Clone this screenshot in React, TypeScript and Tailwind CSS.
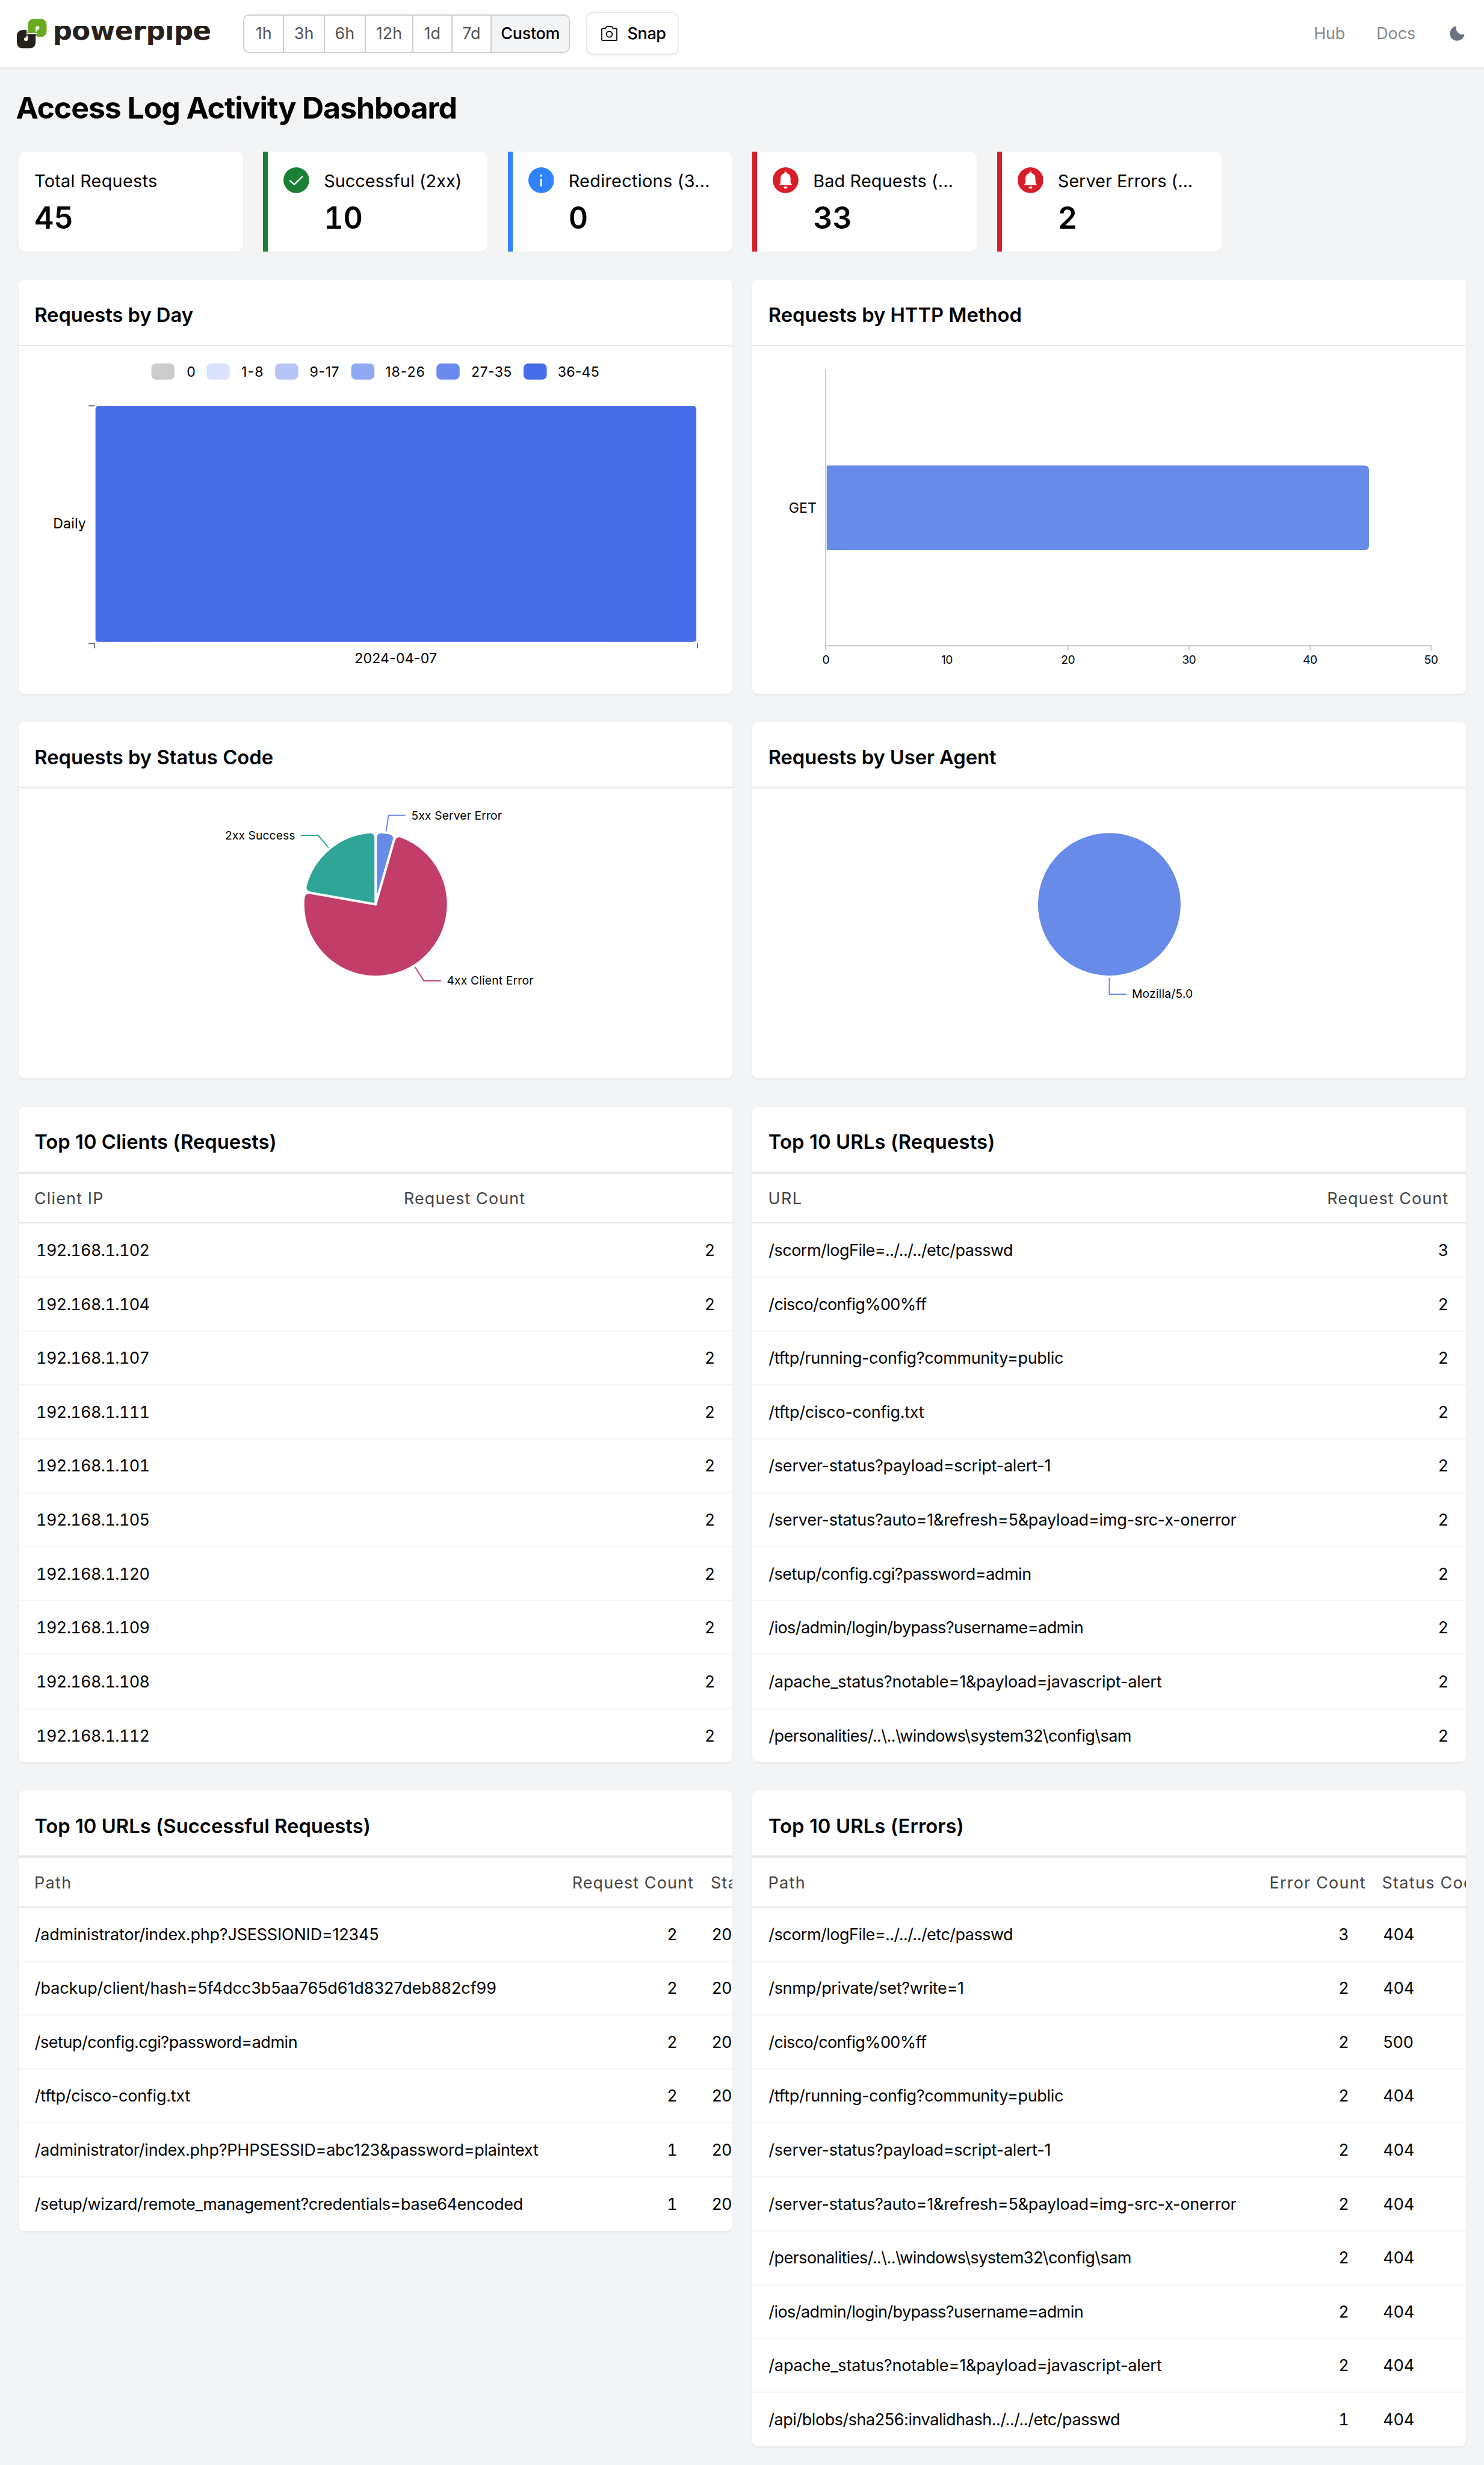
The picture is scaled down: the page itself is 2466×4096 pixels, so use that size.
import React from "react";

/* ---------- text fitted to a measured advance width ---------- */
const ctx = document.createElement("canvas").getContext("2d")!;
function tracking(text: string, size: number, weight: number, width: number, family = "Inter") {
  ctx.font = `${weight} ${size * 10}px "${family}"`;
  return (width - ctx.measureText(text).width / 10) / text.length;
}
function Fit({ t, w, size = 14, weight = 400, family, className = "" }: { t: string; w: number; size?: number; weight?: number; family?: string; className?: string }) {
  return (
    <span className={"whitespace-nowrap " + className} style={{ fontSize: size, fontWeight: weight, letterSpacing: tracking(t, size, weight, w, family) }}>
      {t}
    </span>
  );
}

/* ---------- header ---------- */
function LogoMark() {
  const half = "M57 68 V34 C57 11 70 0 91 0 H120 C142 0 154 11 154 34 V62 C154 84 142 95 120 95 H104 V57 A10 10 0 1 0 97 50 V66 H103 V73 H52 V66 H57 Z";
  return (
    <svg viewBox="0 0 154 153" className="h-[25.7px] w-[25.7px] shrink-0">
      <path d={half} fill="#68ab21" />
      <path d={half} fill="#26211a" transform="rotate(180 77 76.5)" />
    </svg>
  );
}

const ranges = [
  { t: "1h", c: "w-[33.3px]" },
  { t: "3h", c: "w-[35px] border-l-[1.04px]" },
  { t: "6h", c: "w-[35.5px] border-l-[1.04px]" },
  { t: "12h", c: "w-[40.9px] border-l-[1.04px]" },
  { t: "1d", c: "w-[33.6px] border-l-[1.04px]" },
  { t: "7d", c: "w-[34px] border-l-[1.04px]" },
];

function Header() {
  return (
    <header className="flex h-[59px] items-center border-b-[1.04px] border-[#e5e7eb] bg-white pl-[14.6px] pr-[16.4px]">
      <div className="flex w-[195.2px] shrink-0 items-center">
        <LogoMark />
        <div className="ml-[5.2px] mt-[7px] flex h-[20px] items-start overflow-hidden">
          <Fit t="powerpipe" w={136.5} size={23.4} weight={700} family="DejaVu Sans" className="-mt-[10.2px] leading-[28px] text-[#26211a] font-['DejaVu_Sans',sans-serif]" />
        </div>
      </div>
      <div className="flex h-[33.4px] overflow-hidden rounded-[5px] border-[1.04px] border-[#d0d0d0] text-[14px] text-[#555]">
        {ranges.map((r) => (
          <div key={r.t} className={"flex items-center justify-center border-[#d0d0d0] " + r.c}>{r.t}</div>
        ))}
        <div className="flex w-[67.6px] items-center justify-center border-l-[1.04px] border-[#d0d0d0] bg-[#f3f4f6] text-black">
          <Fit t="Custom" w={50.8} weight={450} />
        </div>
      </div>
      <div className="ml-[14px] flex h-[37px] w-[80px] items-center rounded-[6px] border-[1.04px] border-[#e8e8e8] bg-white pl-[12px] shadow-[0_1px_2px_rgba(0,0,0,0.05)]">
        <svg viewBox="0 0 28 26" className="h-[13px] w-[14px]" fill="none" stroke="#000" strokeWidth="1.8" strokeLinejoin="round">
          <path d="M1 6 Q1 4.6 2.4 4.6 H7.4 L9.6 1 H18.4 L20.6 4.6 H25.6 Q27 4.6 27 6 V23.6 Q27 25 25.6 25 H2.4 Q1 25 1 23.6 Z" />
          <circle cx="14" cy="14.4" r="5" />
        </svg>
        <Fit t="Snap" w={33.2} weight={450} className="ml-[8.4px]" />
      </div>
      <div className="ml-auto flex items-center text-[#888]">
        <Fit t="Hub" w={27} className="mr-[27px]" />
        <Fit t="Docs" w={33.7} className="mr-[29.7px]" />
        <svg viewBox="0 0 26 26" className="h-[13px] w-[13px]" fill="#6b7280">
          <path d="M11.6 0.6 A12.6 12.6 0 1 0 25.4 14.4 A11 11 0 0 1 11.6 0.6 Z" />
        </svg>
      </div>
    </header>
  );
}

/* ---------- stat cards ---------- */
type Icon = "check" | "info" | "bell";
function StatIcon({ kind, color }: { kind: Icon; color: string }) {
  return (
    <svg viewBox="0 0 44.4 44.4" className="h-[22.2px] w-[22.2px] shrink-0">
      <circle cx="22.2" cy="22.2" r="22.2" fill={color} />
      {kind === "check" && <path d="M11.2 23 L18.7 29.7 L32.6 15.9" fill="none" stroke="#fff" strokeWidth="2.4" strokeLinecap="round" strokeLinejoin="round" />}
      {kind === "info" && (
        <g fill="#fff">
          <circle cx="22" cy="14.6" r="1.8" />
          <rect x="20.4" y="19.5" width="3.2" height="13.6" rx="1.6" />
        </g>
      )}
      {kind === "bell" && (
        <g fill="#fff">
          <path d="M22.2 7.4 C23.5 7.4 24.2 8.4 24.2 10.3 C28.4 11.2 30.8 14.6 30.8 19.4 V25 C30.8 27 31.3 28.1 32.8 29 V30.4 H11.6 V29 C13.1 28.1 13.6 27 13.6 25 V19.4 C13.6 14.6 16 11.2 20.2 10.3 C20.2 8.4 20.9 7.4 22.2 7.4 Z" />
          <path d="M19.2 33.2 H25.2 V34.6 C25.2 36 24 37 22.2 37 C20.4 37 19.2 36 19.2 34.6 Z" />
        </g>
      )}
    </svg>
  );
}

const stats: { label: string; w: number; value: string; icon?: Icon; color?: string; bar?: string }[] = [
  { label: "Total Requests", w: 106.2, value: "45" },
  { label: "Successful (2xx)", w: 119, value: "10", icon: "check", color: "#1a8036", bar: "border-[#1a8036]" },
  { label: "Redirections (3...", w: 122.2, value: "0", icon: "info", color: "#3083ff", bar: "border-[#3083ff]" },
  { label: "Bad Requests (...", w: 121, value: "33", icon: "bell", color: "#da1e28", bar: "border-[#da1e28]" },
  { label: "Server Errors (...", w: 116.6, value: "2", icon: "bell", color: "#da1e28", bar: "border-[#da1e28]" },
];

function Stat({ s }: { s: (typeof stats)[number] }) {
  return (
    <div className={"flex h-[86px] bg-white pt-[13px] shadow-[0_1px_1px_rgba(0,0,0,0.03)] " + (s.icon ? "rounded-r-[6px] border-l-[4.16px] pl-[13.4px] " + s.bar : "rounded-[6px] pl-[13.6px]")}>
      {s.icon && (
        <div className="mr-[12.6px] flex h-[23px] items-center">
          <StatIcon kind={s.icon} color={s.color!} />
        </div>
      )}
      <div className="flex flex-col">
        <div className="flex h-6 items-center pt-px">
          <Fit t={s.label} w={s.w} size={15} />
        </div>
        <div className="mt-[4px] flex h-8 items-center text-[26px] font-semibold tabular-nums">{s.value}</div>
      </div>
    </div>
  );
}

/* ---------- panels ---------- */
function Panel({ title, w, className = "", children }: { title: string; w: number; className?: string; children: React.ReactNode }) {
  return (
    <section className={"flex flex-col overflow-hidden rounded-[5px] bg-white shadow-[0_1px_2px_rgba(0,0,0,0.06)] " + className}>
      <div className="flex h-[57px] shrink-0 items-center border-b-[1.04px] border-[#e5e7eb] pl-[13.7px] pt-[4.6px]">
        <Fit t={title} w={w - 0.6} size={17} weight={600} />
      </div>
      {children}
    </section>
  );
}

function Label({ x, y, w, size, children }: { x: number; y: number; w: number; size: number; children: string }) {
  return (
    <text x={x} y={y} fontSize={size} textLength={w} lengthAdjust="spacing" fill="#000">
      {children}
    </text>
  );
}

const legend: [string, number, number, number, string][] = [
  ["0", 261, 322, 15, "#cccccc"],
  ["1-8", 356, 416, 38, "#d9e2fa"],
  ["9-17", 474.5, 534, 51, "#b7c5f6"],
  ["18-26", 605.7, 664.5, 68, "#91a8f2"],
  ["27-35", 752.7, 812.6, 70, "#6c8aee"],
  ["36-45", 903, 962, 71.5, "#466ce7"],
];

function DayChart() {
  return (
    <svg viewBox="32 597 1231 600" className="h-[300px] w-[615.5px]">
      {legend.map(([t, sx, tx, w, c]) => (
        <g key={t}>
          <rect x={sx} y="627" width="40" height="28" rx="8" fill={c} />
          <Label x={tx} y={649.5} w={w} size={24}>{t}</Label>
        </g>
      ))}
      <rect x="164.5" y="700.5" width="1036.5" height="407" rx="5" fill="#466ce7" />
      <path d="M152.5 700 H163 M152.5 1110 H163 V1118.5 M1203 1109 V1118.5" stroke="#6e7079" strokeWidth="2" fill="none" />
      <Label x={91.5} y={912} w={56.5} size={24}>Daily</Label>
      <Label x={611.5} y={1144} w={142} size={24}>2024-04-07</Label>
    </svg>
  );
}

function MethodChart() {
  return (
    <svg viewBox="1298 597 1231 600" className="h-[300px] w-[615.5px]">
      <path d="M1425 638 V1122.5 M1424 1114 H2470" stroke="#ccc" strokeWidth="2" shapeRendering="crispEdges" />
      {[0, 1, 2, 3, 4, 5].map((i) => (
        <g key={i}>
          {i > 0 && <path d={`M${1425 + i * 208.8} 1114 V1122.5`} stroke="#ccc" strokeWidth="2" shapeRendering="crispEdges" />}
          <text x={1425 + i * 208.8} y="1145" fontSize="20" textAnchor="middle" letterSpacing="-0.5">{i * 10}</text>
        </g>
      ))}
      <path d="M1426.5 803 H2354 Q2362 803 2362 811 V941 Q2362 949 2354 949 H1426.5 Z" fill="#688ae8" />
      <Label x={1361} y={884.5} w={48} size={24}>GET</Label>
    </svg>
  );
}

function slice(cx: number, cy: number, r: number, a0: number, a1: number, k: number) {
  const p = (deg: number, rad: number) => {
    const a = ((deg - 90) * Math.PI) / 180;
    return `${(cx + rad * Math.cos(a)).toFixed(2)} ${(cy + rad * Math.sin(a)).toFixed(2)}`;
  };
  const d = (k / r) * (180 / Math.PI);
  return `M${cx} ${cy} L${p(a0, r - k)} Q${p(a0, r)} ${p(a0 + d, r)} A${r} ${r} 0 ${a1 - a0 > 180 ? 1 : 0} 1 ${p(a1 - d, r)} Q${p(a1, r)} ${p(a1, r - k)} Z`;
}

function StatusChart() {
  return (
    <svg viewBox="32 1360 1231 500" className="h-[250px] w-[615.5px]">
      <g stroke="#fff" strokeWidth="4" strokeLinejoin="round">
        <path d={slice(647.8, 1560, 125, 0, 16, 11)} fill="#688ae8" />
        <path d={slice(647.8, 1560, 125, 16, 280, 11)} fill="#c33d69" />
        <path d={slice(647.8, 1560, 125, 280, 360, 11)} fill="#2ea597" />
      </g>
      <g fill="none" strokeWidth="2">
        <path d="M666 1434 L670 1406.5 H699" stroke="#688ae8" />
        <path d="M566.5 1462.5 L548.5 1441 H519" stroke="#2ea597" />
        <path d="M715.7 1668 L731 1692 H760.5" stroke="#c33d69" />
      </g>
      <Label x={709.5} y={1413.5} w={156} size={20}>5xx Server Error</Label>
      <Label x={388} y={1448.5} w={121} size={20}>2xx Success</Label>
      <Label x={770.5} y={1698.5} w={149.5} size={20}>4xx Client Error</Label>
    </svg>
  );
}

function AgentChart() {
  return (
    <svg viewBox="1298 1360 1231 500" className="h-[250px] w-[615.5px]">
      <circle cx="1914" cy="1560" r="123" fill="#688ae8" />
      <path d="M1914 1687 V1715 H1944" stroke="#688ae8" strokeWidth="2" fill="none" />
      <Label x={1953} y={1721} w={105} size={20}>Mozilla/5.0</Label>
    </svg>
  );
}

/* ---------- tables ---------- */
function Row({ cols, head, children }: { cols: string; head?: boolean; children: React.ReactNode }) {
  return (
    <div
      className={
        "grid items-center pt-[1.2px] " + cols +
        (head
          ? " h-[44px] border-y-[1.04px] border-[#e5e7eb] text-[#444]"
          : " h-[46.5px] border-b-[1.04px] border-[#f3f4f6] last:h-[46px] last:border-b-0")
      }
    >
      {children}
    </div>
  );
}

const RequestCount = () => <Fit t="Request Count" w={104.9} />;

const ips = ["102", "104", "107", "111", "101", "105", "120", "109", "108", "112"];

const W: Record<string, number> = {
  "/scorm/logFile=../../../etc/passwd": 210.6,
  "/cisco/config%00%ff": 136,
  "/tftp/running-config?community=public": 254.2,
  "/tftp/cisco-config.txt": 134,
  "/server-status?payload=script-alert-1": 243.4,
  "/server-status?auto=1&refresh=5&payload=img-src-x-onerror": 403.4,
  "/setup/config.cgi?password=admin": 226.5,
  "/ios/admin/login/bypass?username=admin": 271.4,
  "/apache_status?notable=1&payload=javascript-alert": 339,
  "/personalities/..\\..\\windows\\system32\\config\\sam": 312.8,
  "/administrator/index.php?JSESSIONID=12345": 296.8,
  "/backup/client/hash=5f4dcc3b5aa765d61d8327deb882cf99": 398.2,
  "/administrator/index.php?PHPSESSID=abc123&password=plaintext": 434.4,
  "/setup/wizard/remote_management?credentials=base64encoded": 421,
  "/snmp/private/set?write=1": 168.4,
  "/api/blobs/sha256:invalidhash../../../etc/passwd": 303,
};
const Url = ({ t }: { t: string }) => <Fit t={t} w={W[t]} className="pl-[14px]" />;

const urls: [string, number][] = [
  ["/scorm/logFile=../../../etc/passwd", 3],
  ["/cisco/config%00%ff", 2],
  ["/tftp/running-config?community=public", 2],
  ["/tftp/cisco-config.txt", 2],
  ["/server-status?payload=script-alert-1", 2],
  ["/server-status?auto=1&refresh=5&payload=img-src-x-onerror", 2],
  ["/setup/config.cgi?password=admin", 2],
  ["/ios/admin/login/bypass?username=admin", 2],
  ["/apache_status?notable=1&payload=javascript-alert", 2],
  ["/personalities/..\\..\\windows\\system32\\config\\sam", 2],
];
const okUrls: [string, number, number][] = [
  ["/administrator/index.php?JSESSIONID=12345", 2, 200],
  ["/backup/client/hash=5f4dcc3b5aa765d61d8327deb882cf99", 2, 200],
  ["/setup/config.cgi?password=admin", 2, 200],
  ["/tftp/cisco-config.txt", 2, 200],
  ["/administrator/index.php?PHPSESSID=abc123&password=plaintext", 1, 200],
  ["/setup/wizard/remote_management?credentials=base64encoded", 1, 200],
];
const errUrls: [string, number, number][] = [
  ["/scorm/logFile=../../../etc/passwd", 3, 404],
  ["/snmp/private/set?write=1", 2, 404],
  ["/cisco/config%00%ff", 2, 500],
  ["/tftp/running-config?community=public", 2, 404],
  ["/server-status?payload=script-alert-1", 2, 404],
  ["/server-status?auto=1&refresh=5&payload=img-src-x-onerror", 2, 404],
  ["/personalities/..\\..\\windows\\system32\\config\\sam", 2, 404],
  ["/ios/admin/login/bypass?username=admin", 2, 404],
  ["/apache_status?notable=1&payload=javascript-alert", 2, 404],
  ["/api/blobs/sha256:invalidhash../../../etc/passwd", 1, 404],
];

const two = "grid-cols-[332.3px_1fr]";
const ok = "grid-cols-[477.5px_119.5px_100px]";
const err = "grid-cols-[446px_97px_120px]";

export default function App() {
  return (
    <div className="h-[2126.07px] w-[1280px] overflow-hidden bg-[#f3f4f6] text-[14px] leading-5 text-black [zoom:1.9265625] font-['Inter','Liberation_Sans',sans-serif]">
      <Header />
      <main className="flex flex-col pl-4 pr-[15.5px]">
        <h1 className="-ml-[2.3px] mb-[4px] flex h-[68px] items-center">
          <Fit t="Access Log Activity Dashboard" w={380.3} size={26} weight={700} />
        </h1>
        <div className="mb-[24.5px] grid grid-cols-6 gap-x-[17.5px]">
          {stats.map((s) => <Stat key={s.label} s={s} />)}
        </div>
        <div className="grid grid-cols-2 items-start gap-x-[17.5px] gap-y-[24.5px]">
          <Panel title="Requests by Day" w={137.5} className="h-[357px]"><DayChart /></Panel>
          <Panel title="Requests by HTTP Method" w={219.2} className="h-[357px]"><MethodChart /></Panel>
          <Panel title="Requests by Status Code" w={206.6} className="h-[307px]"><StatusChart /></Panel>
          <Panel title="Requests by User Agent" w={197.2} className="h-[307px]"><AgentChart /></Panel>

          <Panel title="Top 10 Clients (Requests)" w={209.4} className="h-[565.5px]">
            <Row cols={two} head>
              <Fit t="Client IP" w={60} className="pl-[13.6px]" />
              <RequestCount />
            </Row>
            <div>
              {ips.map((ip) => (
                <Row key={ip} cols={two}>
                  <span className="pl-[15.2px] tabular-nums tracking-[-0.33px]">192.168.1.{ip}</span>
                  <span className="pr-[15px] text-right">2</span>
                </Row>
              ))}
            </div>
          </Panel>
          <Panel title="Top 10 URLs (Requests)" w={196} className="h-[565.5px]">
            <Row cols="grid-cols-[1fr_160px]" head>
              <Fit t="URL" w={29.6} className="pl-[13.6px]" />
              <span className="pr-[15px] text-right"><RequestCount /></span>
            </Row>
            <div>
              {urls.map(([u, n]) => (
                <Row key={u} cols="grid-cols-[1fr_80px]">
                  <Url t={u} />
                  <span className="pr-[15.4px] text-right">{n}</span>
                </Row>
              ))}
            </div>
          </Panel>

          <Panel title="Top 10 URLs (Successful Requests)" w={290.6}>
            <Row cols={ok} head>
              <Fit t="Path" w={32.4} className="pl-[13.6px]" />
              <RequestCount />
              <Fit t="Status Code" w={88.5} />
            </Row>
            <div>
              {okUrls.map(([u, n, c]) => (
                <Row key={u} cols={ok}>
                  <Url t={u} />
                  <span className="pr-[28.6px] text-right tabular-nums">{n}</span>
                  <span className="pl-px">{c}</span>
                </Row>
              ))}
            </div>
          </Panel>
          <Panel title="Top 10 URLs (Errors)" w={169.2}>
            <Row cols={err} head>
              <Fit t="Path" w={32.4} className="pl-[13.6px]" />
              <Fit t="Error Count" w={83.2} />
              <Fit t="Status Code" w={88.5} />
            </Row>
            <div>
              {errUrls.map(([u, n, c]) => (
                <Row key={u} cols={err}>
                  <Url t={u} />
                  <span className="pr-[28.4px] text-right tabular-nums">{n}</span>
                  <span className="pl-px">{c}</span>
                </Row>
              ))}
            </div>
          </Panel>
        </div>
      </main>
    </div>
  );
}
